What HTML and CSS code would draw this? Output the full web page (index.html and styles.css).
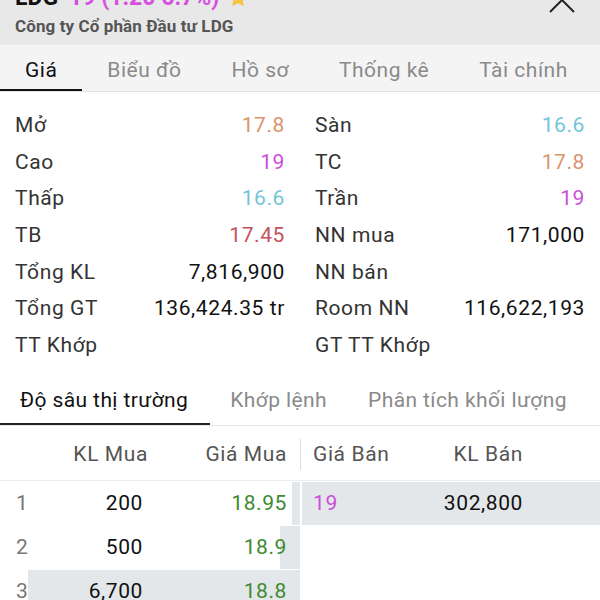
FILE: index.html
```html
<!DOCTYPE html>
<html lang="vi">
<head>
<meta charset="utf-8">
<title>LDG</title>
<link rel="stylesheet" href="styles.css">
</head>
<body>
<div class="app">
  <header class="top">
    <div class="title-row">
      <span class="sym">LDG</span>
      <span class="chg">19 (1.20 6.7%)</span>
      <svg class="star" width="22" height="22" viewBox="0 0 24 24"><path d="M12 1.5l3.1 6.6 7.2.9-5.3 5 1.4 7.1L12 17.6l-6.4 3.5 1.4-7.1-5.3-5 7.2-.9z" fill="#f5c542"/></svg>
      <svg class="close" width="30" height="30" viewBox="0 0 30 30"><path d="M3 3L27 27M27 3L3 27" stroke="#222" stroke-width="2" fill="none"/></svg>
    </div>
    <div class="company">Công ty Cổ phần Đầu tư LDG</div>
  </header>

  <nav class="tabs">
    <span class="tab active">Giá</span>
    <span class="tab">Biểu đồ</span>
    <span class="tab">Hồ sơ</span>
    <span class="tab">Thống kê</span>
    <span class="tab">Tài chính</span>
  </nav>

  <section class="stats">
    <div class="col">
      <div class="row"><span>Mở</span><span class="v orange">17.8</span></div>
      <div class="row"><span>Cao</span><span class="v purple">19</span></div>
      <div class="row"><span>Thấp</span><span class="v cyan">16.6</span></div>
      <div class="row"><span>TB</span><span class="v red">17.45</span></div>
      <div class="row"><span>Tổng KL</span><span class="v">7,816,900</span></div>
      <div class="row"><span>Tổng GT</span><span class="v">136,424.35 tr</span></div>
      <div class="row"><span>TT Khớp</span><span class="v"></span></div>
    </div>
    <div class="col">
      <div class="row"><span>Sàn</span><span class="v cyan">16.6</span></div>
      <div class="row"><span>TC</span><span class="v orange">17.8</span></div>
      <div class="row"><span>Trần</span><span class="v purple">19</span></div>
      <div class="row"><span>NN mua</span><span class="v">171,000</span></div>
      <div class="row"><span>NN bán</span><span class="v"></span></div>
      <div class="row"><span>Room NN</span><span class="v">116,622,193</span></div>
      <div class="row"><span>GT TT Khớp</span><span class="v"></span></div>
    </div>
  </section>

  <nav class="subtabs">
    <span class="subtab active">Độ sâu thị trường</span>
    <span class="subtab">Khớp lệnh</span>
    <span class="subtab">Phân tích khối lượng</span>
  </nav>

  <div class="book">
    <div class="book-head">
      <div class="bid">
        <span></span>
        <span class="num">KL Mua</span>
        <span class="num">Giá Mua</span>
      </div>
      <div class="ask">
        <span>Giá Bán</span>
        <span class="num">KL Bán</span>
        <span></span>
      </div>
    </div>

    <div class="book-row">
      <div class="bid" style="--w: 2.7%">
        <span class="idx">1</span>
        <span class="num">200</span>
        <span class="num green">18.95</span>
      </div>
      <div class="ask" style="--w: 100%">
        <span class="purple">19</span>
        <span class="num">302,800</span>
        <span></span>
      </div>
    </div>
    <div class="book-row">
      <div class="bid" style="--w: 6.7%">
        <span class="idx">2</span>
        <span class="num">500</span>
        <span class="num green">18.9</span>
      </div>
      <div class="ask" style="--w: 0%">
        <span></span><span></span><span></span>
      </div>
    </div>
    <div class="book-row">
      <div class="bid" style="--w: 90.7%">
        <span class="idx">3</span>
        <span class="num">6,700</span>
        <span class="num green">18.8</span>
      </div>
      <div class="ask" style="--w: 0%">
        <span></span><span></span><span></span>
      </div>
    </div>
  </div>
</div>
</body>
</html>
```

FILE: styles.css
```css
* { box-sizing: border-box; }

html, body {
  margin: 0;
  padding: 0;
  background: #ffffff;
}

body {
  font-family: Roboto, "Noto Sans", "Liberation Sans", sans-serif;
  color: #333333;
  overflow: hidden;
  height: 600px;
}

.app {
  width: 600px;
}

/* header */
.top {
  background: #e8e8e8;
  padding: 0 15px 7px;
}

.title-row {
  display: flex;
  align-items: center;
  height: 26px;
  margin-top: -15px;
  font-size: 23px;
  font-weight: 700;
  letter-spacing: 0;
  line-height: 26px;
}

.sym {
  color: #111111;
  margin-right: 11px;
}

.chg {
  color: #d64fe0;
  margin-right: 8px;
}

.star {
  flex: none;
}

.close {
  margin-left: auto;
  margin-right: 8px;
  margin-top: 3px;
  flex: none;
}

.company {
  margin-top: 4px;
  font-size: 17px;
  font-weight: 700;
  line-height: 23px;
  color: #555555;
  letter-spacing: 0.1px;
}

/* main tabs */
.tabs {
  display: flex;
  background: #f4f4f4;
  border-bottom: 1px solid #e3e3e3;
}

.tab {
  padding: 6px 25px 0;
  line-height: 38px;
  font-size: 21px;
  letter-spacing: 0.5px;
  color: #8a8a8a;
  border-bottom: 2px solid transparent;
}

.tab.active {
  color: #111111;
  border-bottom-color: #111111;
}

/* stats */
.stats {
  display: grid;
  grid-template-columns: 300px 300px;
  padding-top: 15px;
}

.col {
  padding: 0 15px;
}

.row {
  display: flex;
  justify-content: space-between;
  font-size: 21px;
  line-height: 36.67px;
  letter-spacing: 0.6px;
  color: #333333;
}

.row .v {
  color: #111111;
}

.orange { color: #dc946a !important; }
.purple { color: #c94fd8 !important; }
.cyan { color: #72c4d7 !important; }
.red { color: #c2525c !important; }
.green { color: #3d8a31 !important; }

/* sub tabs */
.subtabs {
  display: flex;
  margin-top: 14px;
  border-bottom: 1px solid #e8e8e8;
}

.subtab {
  padding: 0 21px 0 20px;
  line-height: 45px;
  font-size: 21px;
  letter-spacing: 0.4px;
  color: #8a8a8a;
  border-bottom: 2px solid transparent;
}

.subtab.active {
  color: #111111;
  border-bottom-color: #222222;
  padding-right: 22px;
}

/* order book */
.book {
  font-size: 21px;
  letter-spacing: 0.6px;
}

.book-head,
.book-row {
  display: flex;
}

.bid {
  width: 300px;
  display: grid;
  grid-template-columns: 50px 98px 1fr;
  padding-right: 13px;
}

.ask {
  flex: 1;
  margin-left: 2px;
  display: grid;
  grid-template-columns: 128px 82px 1fr;
  padding-left: 11px;
}

.num {
  text-align: right;
}

.book-head {
  padding: 13px 0 10px;
  line-height: 31px;
  color: #555555;
  border-bottom: 1px solid #ececec;
}

.book-head .ask {
  margin-left: 0;
  padding-left: 12px;
  border-left: 1px solid #dddddd;
}

.book-row {
  height: 43px;
  line-height: 43px;
  margin-top: 1px;
  color: #111111;
}

.book-row .bid {
  background: linear-gradient(to left, #e3e7ea var(--w), transparent var(--w));
}

.book-row .ask {
  background: linear-gradient(to right, #e3e7ea var(--w), transparent var(--w));
}

.book-row .bid .num:nth-child(2) {
  padding-right: 5px;
}

.idx {
  padding-left: 16px;
  color: #777777;
}
```
